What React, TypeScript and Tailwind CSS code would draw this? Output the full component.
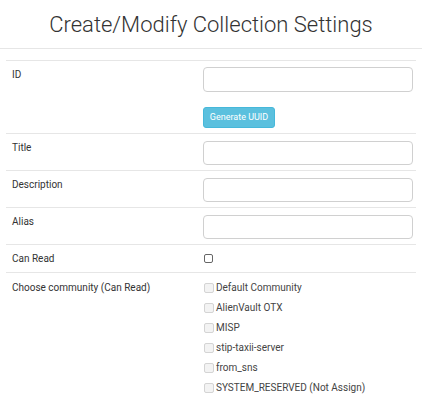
import React from 'react';

const communities = [
  'Default Community',
  'AlienVault OTX',
  'MISP',
  'stip-taxii-server',
  'from_sns',
  'SYSTEM_RESERVED (Not Assign)',
];

const TextRow: React.FC<{ label: string }> = ({ label }) => (
  <div className="grid grid-cols-[197px_1fr] border-t border-[#e6e6e6] pt-[7px] pb-[5px]">
    <div className="pl-[6px] pt-[1px] leading-[12px] text-[10px] text-[#333]">{label}</div>
    <input type="text" className="h-[24px] w-[210px] rounded-[4px] border border-[#d0d0d0] bg-white px-2 text-[11px] outline-none" />
  </div>
);

const App: React.FC = () => {
  return (
    <div className="w-[422px] h-[405px] bg-white overflow-hidden" style={{ fontFamily: 'Roboto, "Liberation Sans", sans-serif' }}>
      <h1 className="h-[49px] pt-[8px] text-center text-[22px] font-light text-[#333] border-b border-[#e6e6e6]">
        Create/Modify Collection Settings
      </h1>
      <div className="mx-[6px] mt-[11px]">
        <div className="grid grid-cols-[197px_1fr] border-t border-[#e6e6e6] pt-[6px] pb-[5px]">
          <div className="pl-[6px] pt-[2px] leading-[12px] text-[10px] text-[#333]">ID</div>
          <div className="flex flex-col items-start">
            <input type="text" className="h-[25px] w-[210px] rounded-[4px] border border-[#d0d0d0] bg-white px-2 text-[11px] outline-none" />
            <button type="button" className="mt-[15px] h-[21px] w-[72px] rounded-[3px] border border-[#46b8da] bg-[#5bc0de] text-[9px] text-white">
              Generate UUID
            </button>
          </div>
        </div>
        <TextRow label="Title" />
        <TextRow label="Description" />
        <TextRow label="Alias" />
        <div className="grid grid-cols-[197px_1fr] border-t border-[#e6e6e6] h-[28px] items-center">
          <div className="pl-[6px] text-[10px] text-[#333]">Can Read</div>
          <span className="block w-[9px] h-[9px] ml-[1px] rounded-[2px] border border-[#666] bg-white" />
        </div>
        <div className="grid grid-cols-[197px_1fr] border-t border-[#e6e6e6] pt-[8px]">
          <div className="pl-[6px] pt-[1px] leading-[12px] text-[10px] text-[#333]">Choose community (Can Read)</div>
          <div className="flex flex-col gap-[7px]">
            {communities.map((c) => (
              <label key={c} className="flex items-center h-[13px] text-[10px] text-[#444]">
                <span className="block w-[10px] h-[10px] ml-[1px] mr-[2px] rounded-[2px] border border-[#d4d4d4] bg-[#f3f3f3]" />
                {c}
              </label>
            ))}
          </div>
        </div>
      </div>
    </div>
  );
};

export default App;
